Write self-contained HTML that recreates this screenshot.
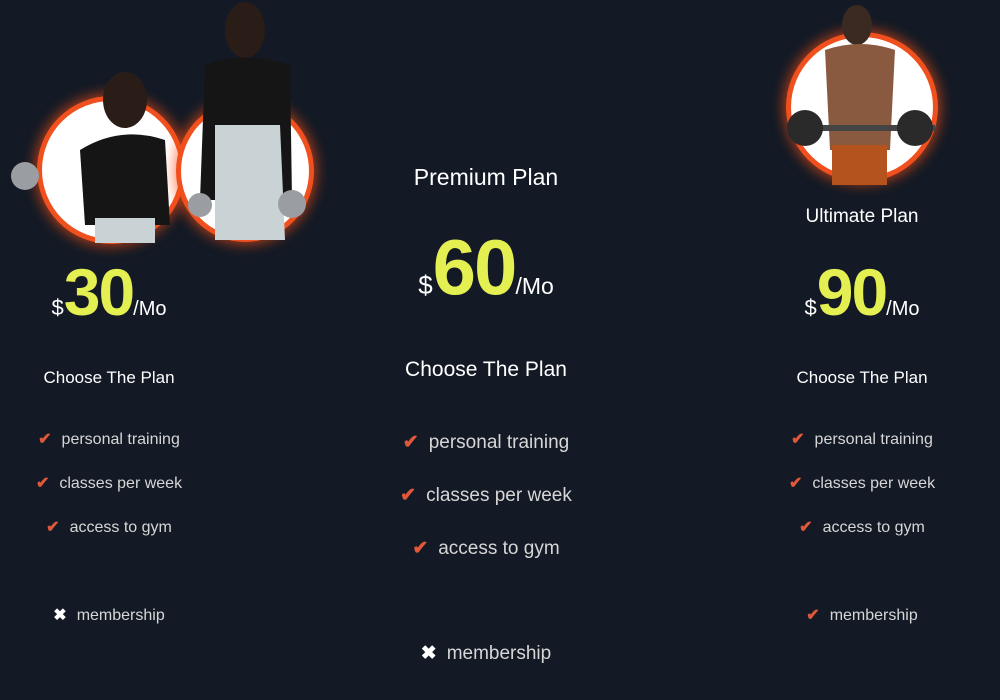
<!DOCTYPE html>
<html><head><style>
body{margin:0;width:1000px;height:700px;background:#131a25;overflow:hidden;font-family:"Liberation Sans",sans-serif;color:#e8e8e8;position:relative}
.a{position:absolute;white-space:nowrap;transform:translateX(-50%)}
.ring{position:absolute;border-radius:50%;background:#fff;border:5px solid #f0501e;box-shadow:0 0 12px 3px rgba(255,80,20,.6);box-sizing:border-box}
.price{color:#fff}
.price b{color:#e4ef52;font-weight:bold;letter-spacing:-2px}
.ck{color:#e0573a;font-weight:bold;margin-right:10px}
.x{color:#fff;font-weight:bold;margin-right:10px}
.f1{font-size:16px;color:#d6d6d6}
.f2{font-size:19px;color:#d6d6d6}
</style></head><body>
<div class="ring" style="left:37px;top:96px;width:148px;height:148px"></div>
<div class="ring" style="left:176px;top:100px;width:138px;height:142px"></div>
<svg style="position:absolute;left:0;top:0" width="330" height="250">
<ellipse cx="125" cy="100" rx="22" ry="28" fill="#2a1d18"/>
<path d="M80 150 Q120 125 165 140 L170 225 L85 225 Z" fill="#151515"/>
<rect x="95" y="218" width="60" height="25" fill="#c9d3d6"/>
<ellipse cx="245" cy="30" rx="20" ry="28" fill="#2a1d18"/>
<path d="M205 65 Q245 50 290 65 L292 200 L200 200 Z" fill="#151515"/>
<path d="M215 125 L280 125 L285 240 L215 240 Z" fill="#c9d3d6"/>
<circle cx="25" cy="176" r="14" fill="#9a9ea2"/><circle cx="200" cy="205" r="12" fill="#9a9ea2"/><circle cx="292" cy="204" r="14" fill="#9a9ea2"/>
</svg>
<div class="ring" style="left:786px;top:32px;width:152px;height:150px"></div>
<svg style="position:absolute;left:780px;top:0" width="170" height="190">
<ellipse cx="77" cy="25" rx="15" ry="20" fill="#3a2a22"/>
<path d="M45 50 Q80 38 115 50 L110 150 L50 150 Z" fill="#8a5a40"/>
<rect x="52" y="145" width="55" height="40" fill="#b5531f"/>
<rect x="15" y="125" width="140" height="6" fill="#444"/>
<circle cx="25" cy="128" r="18" fill="#2a2a2a"/><circle cx="135" cy="128" r="18" fill="#2a2a2a"/>
</svg>

<div class="a" style="left:109px;top:254px"><span class="price"><span style="font-size:22px">$</span><b style="font-size:66px">30</b><span style="font-size:20px">/Mo</span></span></div>
<div class="a" style="left:486px;top:164px;font-size:23px;color:#fff">Premium Plan</div>
<div class="a" style="left:486px;top:222px"><span class="price"><span style="font-size:26px">$</span><b style="font-size:78px">60</b><span style="font-size:23px">/Mo</span></span></div>
<div class="a" style="left:862px;top:206px;font-size:19px;color:#fff">Ultimate Plan</div>
<div class="a" style="left:862px;top:254px"><span class="price"><span style="font-size:22px">$</span><b style="font-size:66px">90</b><span style="font-size:20px">/Mo</span></span></div>

<div class="a" style="left:109px;top:368px;font-size:17px;color:#fff">Choose The Plan</div>
<div class="a" style="left:486px;top:358px;font-size:21px;color:#fff">Choose The Plan</div>
<div class="a" style="left:862px;top:368px;font-size:17px;color:#fff">Choose The Plan</div>

<div class="a f1" style="left:109px;top:429px"><span class="ck">✔</span>personal training</div>
<div class="a f1" style="left:109px;top:473px"><span class="ck">✔</span>classes per week</div>
<div class="a f1" style="left:109px;top:517px"><span class="ck">✔</span>access to gym</div>
<div class="a f1" style="left:109px;top:605px"><span class="x">✖</span>membership</div>

<div class="a f2" style="left:486px;top:431px"><span class="ck">✔</span>personal training</div>
<div class="a f2" style="left:486px;top:484px"><span class="ck">✔</span>classes per week</div>
<div class="a f2" style="left:486px;top:537px"><span class="ck">✔</span>access to gym</div>
<div class="a f2" style="left:486px;top:642px"><span class="x">✖</span>membership</div>

<div class="a f1" style="left:862px;top:429px"><span class="ck">✔</span>personal training</div>
<div class="a f1" style="left:862px;top:473px"><span class="ck">✔</span>classes per week</div>
<div class="a f1" style="left:862px;top:517px"><span class="ck">✔</span>access to gym</div>
<div class="a f1" style="left:862px;top:605px"><span class="ck">✔</span>membership</div>
</body></html>
